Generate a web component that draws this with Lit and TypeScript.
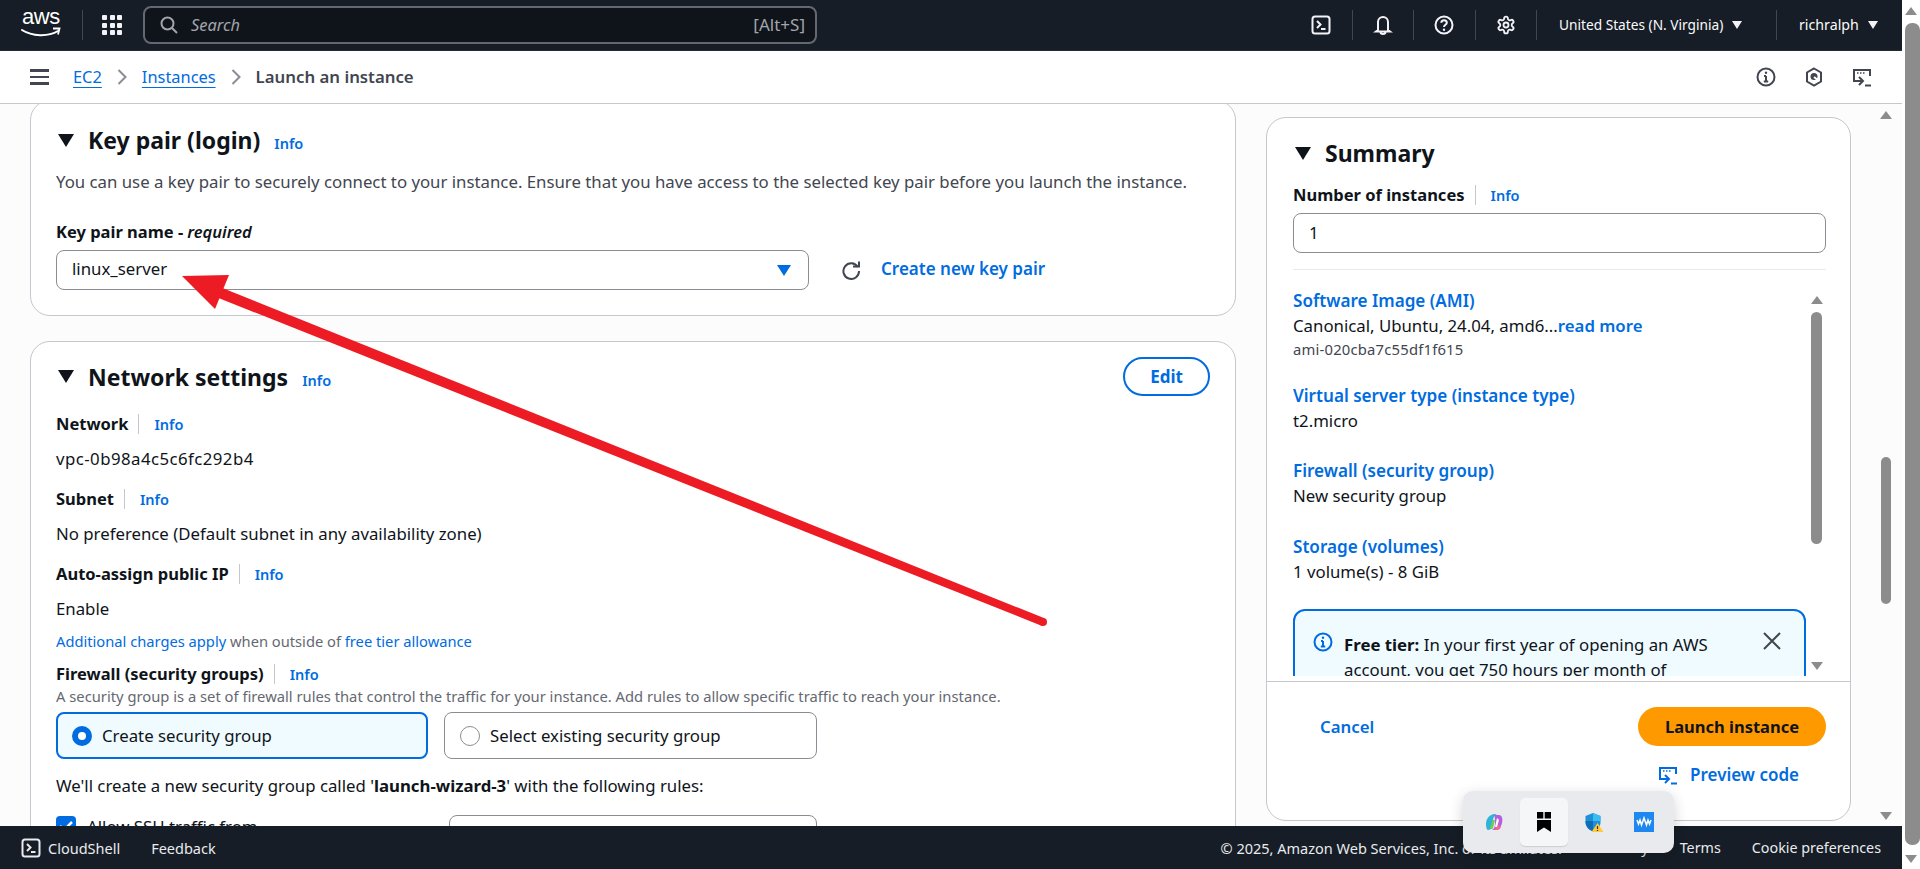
import { LitElement, html, svg, css } from 'lit';
import { customElement } from 'lit/decorators.js';

const tri = (cls: string) => html`<span class=${cls}></span>`;

const CLOUDSHELL = svg`<rect x="1.5" y="1.5" width="17" height="17" rx="2.5" fill="none" stroke="currentColor" stroke-width="2"/><path d="M6 6l3.5 3.5L6 13M10 14h4.5" fill="none" stroke="currentColor" stroke-width="2"/>`;
const PREVIEW = svg`<path d="M6 14H2V3h16v6" fill="none" stroke="currentColor" stroke-width="2"/><path d="M5 6h1.5M8 6h1.5M11 6h1.5" stroke="currentColor" stroke-width="1.6"/><path d="M7 10l4 4-4 4M3 14h7" fill="none" stroke="currentColor" stroke-width="2"/><path d="M13 18.5h6" stroke="currentColor" stroke-width="2"/>`;

@customElement('app-root')
export class AppRoot extends LitElement {
  static styles = css`
    :host {
      display: block;
      position: relative;
      width: 1920px;
      height: 869px;
      overflow: hidden;
      background: #fff;
      font-family: 'Noto Sans', sans-serif;
      font-size: 16.8px;
      line-height: 24px;
      color: #0f141a;
    }
    .page { display: flex; height: 869px; }
    .main { width: 1902px; display: flex; flex-direction: column; }

    .topbar {
      height: 50px;
      background: #161d26;
      display: flex;
      align-items: center;
      color: #f3f3f7;
      flex: none;
      border-bottom: 1px solid #232b37;
    }
    .logo { width: 40px; margin-left: 21px; height: 38px; position: relative; }
    .logo span {
      display: block;
      font-family: 'Liberation Sans', sans-serif;
      font-size: 22px;
      line-height: 22px;
      text-align: center;
      letter-spacing: -0.4px;
      color: #fff;
    }
    .logo svg { position: absolute; left: 0; top: 21px; }
    .vsep { width: 1px; height: 30px; background: #424650; margin-left: 21px; }
    .grid {
      margin-left: 19px;
      width: 20px;
      display: grid;
      grid-template-columns: repeat(3, 5px);
      gap: 2.5px;
    }
    .grid i { height: 5px; background: #f3f3f7; border-radius: 1px; }
    .search {
      margin-left: 21px;
      width: 674px;
      height: 38px;
      box-sizing: border-box;
      border: 2px solid #656871;
      border-radius: 8px;
      background: #0f141a;
      display: flex;
      align-items: center;
      padding: 0 10px 0 14px;
      color: #a4a4ad;
      font-size: 16.4px;
    }
    .search em { margin-left: 12px; flex: 1; }
    .search span { font-size: 17px; }
    .cells { margin-left: auto; display: flex; align-items: center; }
    .cell {
      width: 61.5px;
      height: 30px;
      box-sizing: border-box;
      border-right: 1px solid #424650;
      display: flex;
      align-items: center;
      justify-content: center;
    }
    .drop {
      height: 30px;
      box-sizing: border-box;
      padding-left: 22px;
      display: flex;
      align-items: center;
      font-size: 13.7px;
      gap: 9px;
      color: #fbfbfb;
    }
    .drop.region { width: 240px; border-right: 1px solid #424650; }
    .drop.user { width: 125px; font-size: 14.2px; }
    .tri-w { width: 0; height: 0; border-left: 5px solid transparent; border-right: 5px solid transparent; border-top: 8px solid #f3f3f7; }

    .crumbs {
      height: 53px;
      box-sizing: border-box;
      border-bottom: 1px solid #c6c6cd;
      flex: none;
      display: flex;
      align-items: center;
      padding-left: 30px;
      font-size: 16.4px;
      background: #fff;
    }
    .burger { width: 19px; display: flex; flex-direction: column; gap: 4px; margin-right: 24px; }
    .burger i { height: 2.5px; background: #424650; }
    .crumbs a { color: #006ce0; text-decoration: underline; text-underline-offset: 4px; }
    .crumbs svg.chev { margin: 0 15px; color: #8c8c94; }
    .crumbs b { font-weight: 600; color: #424650; font-size: 16.8px; }
    .crumb-icons { margin-left: auto; display: flex; align-items: center; gap: 28px; padding-right: 30px; color: #424650; }

    .content { flex: 1; display: flex; overflow: hidden; background: #fcfcfd; padding-left: 30px; min-height: 0; }
    .left { width: 1206px; flex: none; margin-top: -4px; }
    .card {
      box-sizing: border-box;
      background: #fff;
      border: 1px solid #c6c6cd;
      border-radius: 20px;
      padding-left: 25px;
      padding-right: 25px;
    }
    .kp { height: 216px; padding-top: 24px; margin-bottom: 25px; }
    .head { display: flex; align-items: center; height: 30px; }
    .head .tri { margin-left: 2px; margin-right: 14px; }
    .tri { width: 0; height: 0; border-left: 8px solid transparent; border-right: 8px solid transparent; border-top: 13px solid #0f141a; flex: none; }
    h2 { margin: 0; font-size: 23px; line-height: 30px; font-weight: 700; }
    .info { color: #006ce0; font-size: 14.5px; font-weight: 600; line-height: 20px; }
    .head .info { margin-left: 14px; position: relative; top: 3px; }
    .desc { color: #424650; line-height: 24px; }
    .kp .desc { margin-top: 15px; }
    .label { display: flex; align-items: center; height: 22px; font-weight: 700; font-size: 16.5px; }
    .label .sep { width: 1px; height: 20px; background: #c6c6cd; margin: 0 15px 0 10px; }
    .label em { font-weight: 600; font-style: italic; margin-left: 4px; }
    .kp .label { margin-top: 27px; margin-bottom: 7px; }
    .row { display: flex; align-items: center; }
    .select {
      box-sizing: border-box;
      width: 753px;
      height: 40px;
      border: 1px solid #8c8c94;
      border-radius: 8px;
      display: flex;
      align-items: center;
      justify-content: space-between;
      padding: 0 17px 2px 15px;
      background: #fff;
    }
    .tri-b { width: 0; height: 0; border-left: 7px solid transparent; border-right: 7px solid transparent; border-top: 11px solid #006ce0; margin-top: 2px; }
    .refresh { margin-left: 32px; margin-right: 20px; color: #424650; display: flex; }
    .lnk { color: #006ce0; font-weight: 600; }
    .row .lnk { position: relative; top: -1px; font-size: 17px; }

    .net { padding-top: 15px; height: 700px; }
    .net .head { height: 39px; }
    .edit {
      margin-left: auto;
      margin-right: 0;
      box-sizing: border-box;
      width: 87px;
      height: 39px;
      border: 2px solid #006ce0;
      border-radius: 20px;
      color: #006ce0;
      font-weight: 700;
      font-size: 17px;
      display: flex;
      align-items: center;
      justify-content: center;
    }
    .mt17 { margin-top: 17px; }
    .mt12 { margin-top: 12px; }
    .vpc { letter-spacing: 0.45px; }
    .small { font-size: 14.7px; line-height: 20px; color: #656871; margin-top: 10px; }
    .small a { color: #006ce0; }
    .net .fw { margin-top: 12px; }
    .hint { font-size: 14.75px; line-height: 18px; color: #656871; margin-top: 2px; }
    .radios { display: flex; gap: 16px; margin-top: 7px; }
    .radio {
      box-sizing: border-box;
      width: 373px;
      height: 47px;
      border: 1px solid #8c8c94;
      border-radius: 8px;
      display: flex;
      align-items: center;
      padding-left: 15px;
      gap: 10px;
    }
    .radio.on { width: 372px; border: 2px solid #006ce0; background: #f0fbff; padding-left: 14px; }
    .radio i { box-sizing: border-box; width: 20px; height: 20px; border-radius: 50%; border: 1px solid #8c8c94; background: #fff; flex: none; }
    .radio.on i { border: 6px solid #006ce0; }
    .created { margin-top: 15px; }
    .created b { font-weight: 700; }
    .ssh { display: flex; margin-top: 17px; }
    .check { width: 20px; height: 20px; border-radius: 4px; background: #006ce0; margin-top: 1px; display: flex; color: #fff; }
    .ssh .t { margin-left: 11px; width: 362px; }
    .ssh .sel { width: 368px; height: 40px; box-sizing: border-box; border: 1px solid #8c8c94; border-radius: 8px; padding: 7px 15px; }

    .right { width: 585px; margin-left: 30px; flex: none; padding-top: 13px; }
    .summary { height: 704px; padding: 20px 0 0 0; }
    .summary .pad { padding: 0 24px 0 26px; }
    .summary .label { margin-top: 16px; margin-bottom: 7px; }
    .input {
      box-sizing: border-box;
      height: 40px;
      border: 1px solid #8c8c94;
      border-radius: 8px;
      display: flex;
      align-items: center;
      padding: 0 15px;
    }
    .summary hr { border: 0; height: 1px; background: #e8e8ed; margin: 16px 0 20px; }
    .scroll { display: flex; height: 386px; padding-left: 26px; overflow: hidden; }
    .items { width: 513px; flex: none; }
    .item { margin-bottom: 27px; }
    .item.first { margin-bottom: 26px; }
    .item.wide { margin-bottom: 28px; }
    .item.last { margin-bottom: 25px; }
    .item .t { color: #006ce0; font-weight: 600; font-size: 17.1px; line-height: 22px; margin-bottom: 2px; }
    .item .m { font-size: 14.8px; letter-spacing: 0.2px; line-height: 20px; color: #424650; margin-top: 1px; }
    .alert {
      box-sizing: border-box;
      border: 2px solid #006ce0;
      border-radius: 12px;
      background: #f0fbff;
      height: 200px;
      padding: 21px 16px 0 18px;
      display: flex;
      color: #0f141a;
    }
    .alert .ic { color: #006ce0; margin-right: 11px; }
    .alert .tx { width: 400px; line-height: 25px; }
    .alert .x { margin-left: auto; color: #424650; margin-top: -1px; margin-right: 6px; }
    .bar-in { width: 11px; margin-left: 5px; display: flex; flex-direction: column; align-items: center; }
    .up { width: 0; height: 0; border-left: 6px solid transparent; border-right: 6px solid transparent; border-bottom: 8px solid #8c8c8c; }
    .dn { width: 0; height: 0; border-left: 6px solid transparent; border-right: 6px solid transparent; border-top: 8px solid #8c8c8c; }
    .bar-in .up { margin-top: 6px; }
    .bar-in .th { width: 11px; height: 232px; background: #8c8c8c; border-radius: 6px; margin-top: 8px; }
    .bar-in .dn { margin-top: auto; margin-bottom: 6px; }
    .acts { border-top: 1px solid #c6c6cd; margin-top: 5px; padding: 25px 24px 0 53px; display: flex; align-items: center; justify-content: space-between; }
    .launch {
      width: 188px;
      height: 39px;
      border-radius: 20px;
      background: #ff9900;
      font-weight: 700;
      font-size: 16.5px;
      display: flex;
      align-items: center;
      justify-content: center;
    }
    .prev { display: flex; justify-content: flex-end; align-items: center; gap: 12px; margin-top: 18px; padding-right: 51px; height: 22px; font-size: 17px; }

    .bar-page { width: 21px; margin-left: auto; display: flex; flex-direction: column; align-items: center; padding-right: 6px; box-sizing: content-box; }
    .bar-page .up { margin-top: 7px; }
    .bar-page .th { width: 10px; height: 147px; background: #8c8c8c; border-radius: 5px; margin-top: 338px; }
    .bar-page .dn { margin-top: auto; margin-bottom: 6px; }

    .foot {
      height: 43px;
      flex: none;
      background: #161d26;
      color: #e9ebed;
      font-size: 14.5px;
      display: flex;
      align-items: center;
      padding: 0 21px;
    }
    .foot svg { margin-right: 7px; }
    .foot .fb { margin-left: 31px; }
    .foot .r { margin-left: auto; display: flex; gap: 31px; font-size: 14.3px; }
    .foot .copy { margin-right: 8px; font-size: 14.5px; }

    .outer { width: 18px; flex: none; background: #fff; display: flex; flex-direction: column; align-items: flex-end; }
    .outer .up { margin: 7px 3px 0 0; }
    .outer .th { width: 15px; height: 822px; background: #8c8c8c; border-radius: 7px; margin-top: 8px; }
    .outer .dn { margin: auto 3px 6px 0; }

    .arrow { position: absolute; left: 0; top: 0; pointer-events: none; }
    .fly {
      position: absolute;
      left: 1463px;
      top: 791px;
      width: 211px;
      height: 62px;
      box-sizing: border-box;
      border-radius: 10px;
      background: #e9eaed;
      box-shadow: 0 4px 14px rgba(0, 0, 0, 0.18);
      display: flex;
      align-items: center;
    }
    .fly div { width: 50px; height: 48px; display: flex; align-items: center; justify-content: center; flex: none; }
    .fly .tile { background: #f5f6f8; border-radius: 5px; box-shadow: 0 1px 1px rgba(0, 0, 0, 0.12); width: 48px; margin: 0 1px; }
    .fly .first { margin-left: 6px; }
  `;

  private _icon(body: unknown, size = 20, box = 20) {
    return html`<svg width=${size} height=${size} viewBox="0 0 ${box} ${box}">${body}</svg>`;
  }

  private _infoIcon(size = 20) {
    return this._icon(svg`<circle cx="10" cy="10" r="8.5" fill="none" stroke="currentColor" stroke-width="2"/><path d="M10 9v5.5M7.8 14.5h4.4M8 9h2" fill="none" stroke="currentColor" stroke-width="2"/><circle cx="10" cy="5.8" r="1.2" fill="currentColor"/>`, size);
  }

  private _label(text: string, cls = '') {
    return html`<div class="label ${cls}">${text}<span class="sep"></span><span class="info">Info</span></div>`;
  }

  private _topbar() {
    return html`
      <div class="topbar">
        <div class="logo">
          <span>aws</span>
          <svg width="40" height="14" viewBox="0 0 40 14"><path d="M1 3c10 6.500 26 7 36 1" fill="none" stroke="#fff" stroke-width="2" stroke-linecap="round"/><path d="M32 1.500l6.500 0-1.500 6" fill="none" stroke="#fff" stroke-width="1.800"/></svg>
        </div>
        <div class="vsep"></div>
        <div class="grid">${Array.from({ length: 9 }, () => html`<i></i>`)}</div>
        <div class="search">
          ${this._icon(svg`<circle cx="8.500" cy="8.500" r="6" fill="none" stroke="currentColor" stroke-width="2"/><path d="M13 13l5 5" stroke="currentColor" stroke-width="2"/>`)}
          <em>Search</em><span>[Alt+S]</span>
        </div>
        <div class="cells">
          <div class="cell">${this._icon(CLOUDSHELL)}</div>
          <div class="cell">${this._icon(svg`<path d="M5 15V7a5 5 0 0 1 10 0v8l2 1.500H3zM7.500 17c0 2.500 5 2.500 5 0" fill="none" stroke="currentColor" stroke-width="2"/>`)}</div>
          <div class="cell">${this._icon(svg`<circle cx="10" cy="10" r="8.500" fill="none" stroke="currentColor" stroke-width="2"/><path d="M7.300 7.800c0-3.500 5.500-3.500 5.500 0 0 2-2.800 2-2.800 4.200" fill="none" stroke="currentColor" stroke-width="2"/><circle cx="10" cy="14.800" r="1.200" fill="currentColor"/>`)}</div>
          <div class="cell"><svg width="20" height="20" viewBox="0 0 24 24" fill="none" stroke="currentColor" stroke-width="2.200"><path d="M12.220 2h-.44a2 2 0 0 0-2 2v.18a2 2 0 0 1-1 1.730l-.43.25a2 2 0 0 1-2 0l-.15-.08a2 2 0 0 0-2.730.73l-.22.38a2 2 0 0 0 .73 2.730l.15.1a2 2 0 0 1 1 1.720v.51a2 2 0 0 1-1 1.740l-.15.09a2 2 0 0 0-.73 2.730l.22.38a2 2 0 0 0 2.730.73l.15-.08a2 2 0 0 1 2 0l.43.25a2 2 0 0 1 1 1.730V20a2 2 0 0 0 2 2h.44a2 2 0 0 0 2-2v-.18a2 2 0 0 1 1-1.730l.43-.25a2 2 0 0 1 2 0l.15.08a2 2 0 0 0 2.730-.73l.22-.39a2 2 0 0 0-.73-2.730l-.15-.08a2 2 0 0 1-1-1.740v-.5a2 2 0 0 1 1-1.740l.15-.09a2 2 0 0 0 .73-2.730l-.22-.38a2 2 0 0 0-2.730-.73l-.15.08a2 2 0 0 1-2 0l-.43-.25a2 2 0 0 1-1-1.730V4a2 2 0 0 0-2-2z"/><circle cx="12" cy="12" r="3"/></svg></div>
          <div class="drop region">United States (N. Virginia) <span class="tri-w"></span></div>
          <div class="drop user">richralph <span class="tri-w"></span></div>
        </div>
      </div>`;
  }

  private _crumbs() {
    const chev = html`<svg class="chev" width="10" height="16" viewBox="0 0 10 16"><path d="M1.500 1l7 7-7 7" fill="none" stroke="currentColor" stroke-width="2"/></svg>`;
    return html`
      <div class="crumbs">
        <div class="burger"><i></i><i></i><i></i></div>
        <a>EC2</a>${chev}<a>Instances</a>${chev}<b>Launch an instance</b>
        <div class="crumb-icons">
          ${this._infoIcon()}
          ${this._icon(svg`<path d="M10 1.500l7 4v9l-7 4-7-4v-9z" fill="none" stroke="currentColor" stroke-width="2"/><circle cx="10" cy="9.500" r="3.500" fill="currentColor"/><path d="M10 10l5 4" stroke="#fff" stroke-width="2"/>`)}
          ${this._icon(PREVIEW)}
        </div>
      </div>`;
  }

  private _left() {
    return html`
      <div class="left">
        <div class="card kp">
          <div class="head">${tri('tri')}<h2>Key pair (login)</h2><span class="info">Info</span></div>
          <div class="desc">You can use a key pair to securely connect to your instance. Ensure that you have access to the selected key pair before you launch the instance.</div>
          <div class="label">Key pair name - <em>required</em></div>
          <div class="row">
            <div class="select">linux_server<span class="tri-b"></span></div>
            <span class="refresh">${this._icon(svg`<path d="M16.800 7A7.800 7.800 0 1 0 18 11" fill="none" stroke="currentColor" stroke-width="2"/><path d="M12 6.500h6v-5" fill="none" stroke="currentColor" stroke-width="2"/>`)}</span>
            <span class="lnk">Create new key pair</span>
          </div>
        </div>
        <div class="card net">
          <div class="head">${tri('tri')}<h2>Network settings</h2><span class="info">Info</span><span class="edit">Edit</span></div>
          ${this._label('Network', 'mt17')}
          <div class="mt12 vpc">vpc-0b98a4c5c6fc292b4</div>
          ${this._label('Subnet', 'mt17')}
          <div class="mt12">No preference (Default subnet in any availability zone)</div>
          ${this._label('Auto-assign public IP', 'mt17')}
          <div class="mt12">Enable</div>
          <div class="small"><a>Additional charges apply</a> when outside of <a>free tier allowance</a></div>
          ${this._label('Firewall (security groups)', 'fw')}
          <div class="hint">A security group is a set of firewall rules that control the traffic for your instance. Add rules to allow specific traffic to reach your instance.</div>
          <div class="radios">
            <div class="radio on"><i></i>Create security group</div>
            <div class="radio"><i></i>Select existing security group</div>
          </div>
          <div class="created">We'll create a new security group called '<b>launch-wizard-3</b>' with the following rules:</div>
          <div class="ssh">
            <span class="check">${this._icon(svg`<path d="M4 10l4 4 8-8" fill="none" stroke="currentColor" stroke-width="2.500"/>`)}</span>
            <span class="t">Allow SSH traffic from</span>
            <div class="sel">Anywhere</div>
          </div>
        </div>
      </div>`;
  }

  private _right() {
    return html`
      <div class="right">
        <div class="card summary" style="padding-left:0;padding-right:0">
          <div class="pad">
            <div class="head">${tri('tri')}<h2>Summary</h2></div>
            ${this._label('Number of instances')}
            <div class="input">1</div>
            <hr />
          </div>
          <div class="scroll">
            <div class="items">
              <div class="item first"><div class="t">Software Image (AMI)</div><div>Canonical, Ubuntu, 24.04, amd6...<span class="lnk">read more</span></div><div class="m">ami-020cba7c55df1f615</div></div>
              <div class="item"><div class="t">Virtual server type (instance type)</div><div>t2.micro</div></div>
              <div class="item wide"><div class="t">Firewall (security group)</div><div>New security group</div></div>
              <div class="item last"><div class="t">Storage (volumes)</div><div>1 volume(s) - 8 GiB</div></div>
              <div class="alert">
                <span class="ic">${this._infoIcon()}</span>
                <div class="tx"><b>Free tier:</b> In your first year of opening an AWS account, you get 750 hours per month of</div>
                <span class="x">${this._icon(svg`<path d="M2 2l16 16M18 2L2 18" stroke="currentColor" stroke-width="2"/>`)}</span>
              </div>
            </div>
            <div class="bar-in"><span class="up"></span><span class="th"></span><span class="dn"></span></div>
          </div>
          <div class="acts"><span class="lnk">Cancel</span><span class="launch">Launch instance</span></div>
          <div class="prev"><span class="lnk" style="display:flex">${this._icon(PREVIEW)}</span><span class="lnk">Preview code</span></div>
        </div>
      </div>`;
  }

  render() {
    return html`
      <div class="page">
        <div class="main">
          ${this._topbar()}
          ${this._crumbs()}
          <div class="content">
            ${this._left()}
            ${this._right()}
            <div class="bar-page"><span class="up"></span><span class="th"></span><span class="dn"></span></div>
          </div>
          <div class="foot">
            ${this._icon(CLOUDSHELL)}<span>CloudShell</span><span class="fb">Feedback</span>
            <div class="r"><span class="copy">© 2025, Amazon Web Services, Inc. or its affiliates.</span><span>Privacy</span><span>Terms</span><span>Cookie preferences</span></div>
          </div>
        </div>
        <div class="outer"><span class="up"></span><span class="th"></span><span class="dn"></span></div>
      </div>
      <svg class="arrow" width="1920" height="869" viewBox="0 0 1920 869">
        <path d="M182 276L229 275 215 309z" fill="#ed1c24"/>
        <path d="M206 293L1041.500 625.700 1044.500 618.300 210 283z" fill="#ed1c24"/>
        <circle cx="1043" cy="622" r="4" fill="#ed1c24"/>
      </svg>
      <div class="fly">
        <div class="first"><svg width="20" height="20" viewBox="0 0 20 20"><path d="M2 12c0-5 3-9 8-10h3c-3 1-4 4-4 8s-1 8-5 8c-1 0-2-2-2-6z" fill="#2fb4d9"/><path d="M6 15c1-1 2-4 2-7h3l-2 8c-.5 2-3 1-3-1z" fill="#6fce4e"/><path d="M10 3h5c3 0 4 4 3 8s-3 7-6 7H8c3-1 3-5 3-8 0-3 0-5-1-7z" fill="#b45ee0"/><path d="M10 18h3c2 0 3-1 4-3l-4-3c-1 2-1 5-3 6z" fill="#f0688a"/><path d="M13 6l-2 9h2l2-7z" fill="#fff"/></svg></div>
        <div class="tile"><svg width="14" height="20" viewBox="0 0 14 20"><path d="M0 0h6.300v6.500H0zM7.700 0H14v6.500H7.700zM0 8h14v12l-7-4.500L0 20z" fill="#000"/></svg></div>
        <div><svg width="20" height="20" viewBox="0 0 20 20"><path d="M9 1l7.500 3v6c0 4.500-3 8-7.500 9.500C4.500 18 1.500 14.500 1.500 10V4z" fill="#1f8fd6"/><path d="M9 1l7.500 3v5H9z" fill="#39bdf0"/><path d="M1.500 9H9v10c-4.500-1-7.500-5-7.500-10z" fill="#0c6eb8"/><path d="M13.500 11l6 9h-12z" fill="#ffc83d"/><path d="M13.500 14v3M13.500 18v1" stroke="#333" stroke-width="1.200"/></svg></div>
        <div><svg width="20" height="20" viewBox="0 0 20 20"><rect width="20" height="20" fill="#1e88f0"/><path d="M3 8l1.500 4L6 8l1.500 5L10 6l2.500 7L14 8l1.500 4L17 8" fill="none" stroke="#fff" stroke-width="1.500"/></svg></div>
      </div>
    `;
  }
}
